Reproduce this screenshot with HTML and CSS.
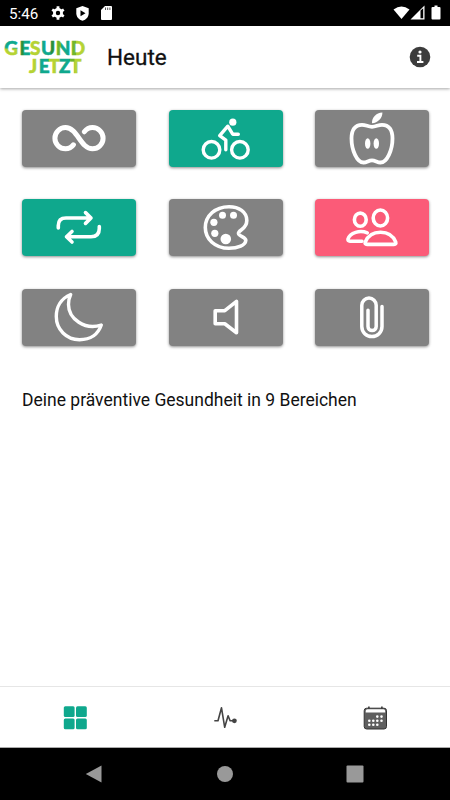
FILE: index.html
```
<!DOCTYPE html>
<html lang="de">

<head>
	<meta charset="utf-8">
	<title>Heute</title>
	<link rel="stylesheet" href="styles.css">
</head>

<body>
	<div class="status-bar">
		<span class="time">5:46</span>
		<svg class="gear" width="14" height="14" viewBox="0 0 14 14">
			<circle cx="7" cy="7" r="3.6" fill="none" stroke="#fff" stroke-width="2.8" />
			<path d="M7 0.3V3M7 11v2.7M1.2 3.65l2.3 1.35M10.5 9l2.3 1.35M1.2 10.35L3.5 9M10.5 5l2.3-1.35" stroke="#fff" stroke-width="2.8" />
		</svg>
		<svg class="shield" width="13" height="15" viewBox="0 0 13 15">
			<path d="M6.5 0l6.2 2.3v4.9c0 3.6-2.5 6.4-6.2 7.6C2.8 13.6.3 10.8.3 7.2V2.3z" fill="#fff" />
			<path d="M4.5 4.3v6l5-3z" fill="#000" />
		</svg>
		<svg class="card" width="11" height="14" viewBox="0 0 11 14">
			<path d="M4 0h6q1 0 1 1v12q0 1-1 1H1q-1 0-1-1V4z" fill="#fff" />
			<path d="M4.5 1.5v2.5M6.7 1.5v2.5M8.9 1.5v2.5" stroke="#555" />
		</svg>
		<svg class="signals" width="50" height="16" viewBox="0 0 50 16">
			<path d="M.5 4.5Q8.5-1.5 16.5 4.5L8.5 14z" fill="#fff" />
			<path d="M17.5 14.5L31.5.5v14z" fill="#fff" />
			<path d="M27.5 5.5l2.7-2.2v9.9h-2.7z" fill="#000" />
			<path d="M39.5 2h2V.6h3V2h2q1 0 1 1v10.5q0 1-1 1h-7q-1 0-1-1V3q0-1 1-1z" fill="#fff" />
		</svg>
	</div>

	<header class="header">
		<svg class="logo" width="82" height="46" viewBox="0 -5 82 46">
			<defs>
				<linearGradient id="g1" x2="0" y2="1">
					<stop offset=".5" stop-color="#0fa88d" />
					<stop offset=".6" stop-color="#b5d334" />
				</linearGradient>
				<linearGradient id="g2">
					<stop offset=".35" stop-color="#2a8f3c" />
					<stop offset=".4" stop-color="#0fa88d" />
				</linearGradient>
				<linearGradient id="g3">
					<stop offset=".35" stop-color="#72b62b" />
					<stop offset=".4" stop-color="#0fa88d" />
				</linearGradient>
				<linearGradient id="g4">
					<stop offset=".35" stop-color="#72b62b" />
					<stop offset=".4" stop-color="#b5d334" />
				</linearGradient>
				<linearGradient id="g5">
					<stop offset=".65" stop-color="#0fa88d" />
					<stop offset=".7" stop-color="#2a8f3c" />
				</linearGradient>
			</defs>
			<g class="logo-text">
				<text x=".2" y="15.8" fill="url(#g1)" stroke="url(#g1)">G</text>
				<text x="15.4" y="15.8" fill="url(#g2)" stroke="url(#g2)">E</text>
				<text x="26" y="15.8" fill="#b5d334" stroke="#b5d334">S</text>
				<text x="37" y="15.8" fill="url(#g5)" stroke="url(#g5)">U</text>
				<text x="51.7" y="15.8" fill="url(#g3)" stroke="url(#g3)">N</text>
				<text x="66.8" y="15.8" fill="url(#g4)" stroke="url(#g4)">D</text>
				<text x="25" y="34" fill="#b5d334" stroke="#b5d334">J</text>
				<text x="34.7" y="34" fill="#0fa88d" stroke="#0fa88d">E</text>
				<text x="44.5" y="34" fill="#b5d334" stroke="#b5d334">T</text>
				<text x="55" y="34" fill="#0fa88d" stroke="#0fa88d">Z</text>
				<text x="66" y="34" fill="url(#g4)" stroke="url(#g4)">T</text>
			</g>
		</svg>
		<h1 class="title">Heute</h1>
		<svg class="info" width="22" height="22" viewBox="0 0 22 22">
			<circle cx="11" cy="11" r="10.3" fill="#3c3c3c" />
			<circle cx="11" cy="6" r="1.6" fill="#fff" />
			<path d="M8.2 9.8h3.2v6M8 16h6.4" fill="none" stroke="#fff" stroke-width="1.9" />
		</svg>
	</header>

	<main class="content">
		<div class="tiles">
			<button class="tile">
				<svg viewBox="0 0 114 57" stroke-width="5">
					<path d="M51.4 34.8C49.5 37.5 47 38.8 43.5 38.8A10.6 10.6 0 0 1 43.5 17.6C55.500 17.6 58.5 38.8 70.5 38.8A10.6 10.6 0 0 0 70.5 17.6C67 17.6 64.5 19 62.3 21.8" />
				</svg>
			</button>
			<button class="tile active">
				<svg viewBox="0 0 114 57" stroke-width="3.4">
					<circle cx="42.5" cy="39.8" r="8.3" />
					<circle cx="70.9" cy="39.8" r="8.3" />
					<circle class="solid" cx="63.8" cy="12.2" r="3.6" />
					<path d="M69.3 24.2h-5.6L58.8 16.2L50.7 25.6L56.8 30.2V39.8" />
				</svg>
			</button>
			<button class="tile">
				<svg viewBox="0 0 114 57" stroke-width="3.8">
					<path d="M57 16.8C53 16.8 51 14.8 47 14.8C40 14.8 36.5 20 36.5 28.5C36.5 40 42 52.5 48.5 52.5C52 52.5 53.5 50.3 57 50.3S62 52.5 65.5 52.5C72 52.5 77.5 40 77.5 28.5C77.5 20 74 14.8 67 14.8C63 14.8 61 16.8 57 16.8z" />
					<path class="solid" d="M57 13.3C56.6 7.5 61 3 67.4 2.5C67.5 8 63 12.8 57 13.3z" />
					<ellipse class="solid" cx="52.7" cy="33.5" rx="2.7" ry="5.3" />
					<ellipse class="solid" cx="61.3" cy="33.5" rx="2.7" ry="5.3" />
				</svg>
			</button>
			<button class="tile active">
				<svg viewBox="0 0 114 57" stroke-width="3.6">
					<path d="M36.3 29V26.5Q36.3 19 44 19H69M63.5 13.6L69 19L63.5 24.4" />
					<path d="M77.3 27.5V29.5Q77.3 37.7 69 37.7H44.5M50 32.5L44.5 37.7L50 43" />
				</svg>
			</button>
			<button class="tile">
				<svg viewBox="0 0 114 57" stroke-width="3.6">
					<path d="M60 7.7C46 7.7 36.3 17 36.3 28.5S46 49.3 60 49.3C69 49.3 76.5 46 76.8 41.5C77 38 70 37.5 69.5 34.5C69 31 77.8 30.5 77.8 21.5C77.8 13 70 7.7 60 7.7z" />
					<circle class="solid" cx="53.5" cy="16.3" r="3.5" />
					<circle class="solid" cx="64.5" cy="16.3" r="3.5" />
					<circle class="solid" cx="44.9" cy="23.3" r="3.6" />
					<circle class="solid" cx="45.8" cy="34.3" r="3.6" />
					<circle class="solid" cx="56.8" cy="40" r="5.3" />
				</svg>
			</button>
			<button class="tile alert">
				<svg viewBox="0 0 114 57" stroke-width="3.6">
					<ellipse cx="65.4" cy="19" rx="7.2" ry="8" />
					<ellipse cx="45.3" cy="20.7" rx="5.9" ry="6.6" />
					<path d="M52 45.4H79Q81.5 45.4 80.7 43C78 36.5 72 33.3 65.5 33.3S53 36.5 50.3 43Q49.5 45.4 52 45.4z" />
					<path d="M52.3 33.9C45 30.8 35 33.5 33 40Q32.5 42.2 35 42.2H47" />
				</svg>
			</button>
			<button class="tile">
				<svg viewBox="0 0 114 57" stroke-width="3.4">
					<path d="M48.7 5.5C39 9.5 34.3 18 34.3 27.5C34.3 40.5 44.5 50.7 57.5 50.7C68 50.7 76 45.5 79.3 36C63 41.5 46.5 30 46.5 15.5Q46.5 10 48.7 5.5z" />
				</svg>
			</button>
			<button class="tile">
				<svg viewBox="0 0 114 57" stroke-width="3.6">
					<path d="M46.2 21.7H55.8L67.5 12.3V43.7L55.8 34.7H46.2z" />
				</svg>
			</button>
			<button class="tile">
				<svg viewBox="0 0 114 57" stroke-width="3.5">
					<path d="M67 17.5V37.5A10.1 10.1 0 0 1 46.8 37.5V16.3A7.2 7.2 0 0 1 61.2 16.3V37.5A4.1 4.1 0 0 1 53 37.5V21.3" />
				</svg>
			</button>
		</div>
		<p class="caption">Deine präventive Gesundheit in 9 Bereichen</p>
	</main>

	<nav class="tabs">
		<svg width="24" height="24" viewBox="0 0 24 24" fill="#0fa88d">
			<rect x=".8" y=".2" width="10.8" height="10.8" rx="1.5" />
			<rect x="13" y=".2" width="10.8" height="10.8" rx="1.5" />
			<rect x=".8" y="12.5" width="10.8" height="10.8" rx="1.5" />
			<rect x="13" y="12.5" width="10.8" height="10.8" rx="1.5" />
		</svg>
		<svg width="24" height="24" viewBox="0 0 24 24">
			<path d="M1.3 14.7h3.7L8.5 1.8l3.2 19.5 3.4-11.5 2 5h4" fill="none" stroke="#444" stroke-width="1.6" stroke-linejoin="round" />
			<circle cx="21.4" cy="14.8" r="2.4" fill="#444" />
		</svg>
		<svg width="24" height="24" viewBox="0 0 24 24">
			<path d="M5.9.5v3M18.9.5v3" stroke="#333" stroke-width="1.5" />
			<rect x="1.2" y="2.2" width="22.3" height="20.8" rx="2.5" fill="#5f5f5f" stroke="#333" />
			<path d="M2.7 6.6V5q0-1.8 1.8-1.8h15.900Q22.2 3.200 22.2 5v1.600z" fill="#fff" />
			<path d="M14.3 10.6h.01M18.5 10.6h.01M6.3 14.7h.01M10.3 14.7h.01M14.3 14.7h.01M18.5 14.7h.01M6.3 18.7h.01M10.3 18.7h.01M14.3 18.7h.01" stroke="#fff" stroke-width="2.6" stroke-linecap="round" />
		</svg>
	</nav>

	<div class="system-nav">
		<svg width="18" height="18" viewBox="0 0 18 18"><path d="M.8 9L16.5.5v17z" /></svg>
		<svg width="18" height="18" viewBox="0 0 18 18"><circle cx="9" cy="9" r="8" /></svg>
		<svg width="18" height="18" viewBox="0 0 18 18"><rect x=".5" y=".5" width="17" height="17" rx="1" /></svg>
	</div>
</body>

</html>
```
FILE: styles.css
```
* {
	box-sizing: border-box;
}

body {
	margin: 0;
	height: 100vh;
	display: flex;
	flex-direction: column;
	overflow: hidden;
	background: #fff;
	font-family: Roboto, sans-serif;
}

svg {
	display: block;
}

.status-bar {
	height: 26px;
	display: flex;
	align-items: center;
	padding: 0 8px 0 9px;
	background: #000;
	color: #fff;
}

.time {
	width: 42px;
	font-size: 15.2px;
	line-height: 18px;
	padding-top: 2px;
}

.shield {
	margin-left: 11px;
}

.card {
	margin-left: 12px;
}

.signals {
	margin-left: auto;
	margin-right: -1px;
}

.header {
	height: 62px;
	display: flex;
	align-items: center;
	padding: 0 19px 0 4px;
	box-shadow: 0 1px 3px rgba(0, 0, 0, 0.35);
}

.logo-text {
	font-family: Lato, sans-serif;
	font-weight: 900;
	font-size: 19px;
	stroke-width: 0.5px;
}

.title {
	margin: 0 auto 0 21px;
	font-size: 22.5px;
	font-weight: 400;
	color: #111;
	-webkit-text-stroke: 0.3px #111;
}

.content {
	flex: 1;
	padding: 21.5px 21px 0 22px;
}

.tiles {
	display: grid;
	grid-template-columns: repeat(3, 114px);
	justify-content: space-between;
	row-gap: 32.7px;
}

.tile {
	height: 57px;
	padding: 0;
	border: 0;
	border-radius: 4px;
	background: #828282;
	box-shadow: 0 1px 3px rgba(0, 0, 0, 0.45);
}

.tile.active {
	background: #0fa88d;
}

.tile.alert {
	background: #fb5b78;
}

.tile svg {
	width: 114px;
	height: 57px;
	fill: none;
	stroke: #fff;
	stroke-linecap: round;
	stroke-linejoin: round;
}

.tile .solid {
	fill: #fff;
	stroke: none;
}

.caption {
	margin: 43px 0 0;
	font-size: 17.5px;
	line-height: 22px;
	color: #111;
}

.tabs {
	height: 62px;
	display: grid;
	grid-template-columns: repeat(3, 1fr);
	place-items: center;
	padding-top: 1px;
	border-top: 1px solid #e6e6e6;
	border-bottom: 1px solid #aaa;
}

.system-nav {
	height: 52px;
	display: flex;
	justify-content: space-between;
	align-items: center;
	padding: 0 86px 0 85px;
	background: #000;
	fill: #999;
}
```
